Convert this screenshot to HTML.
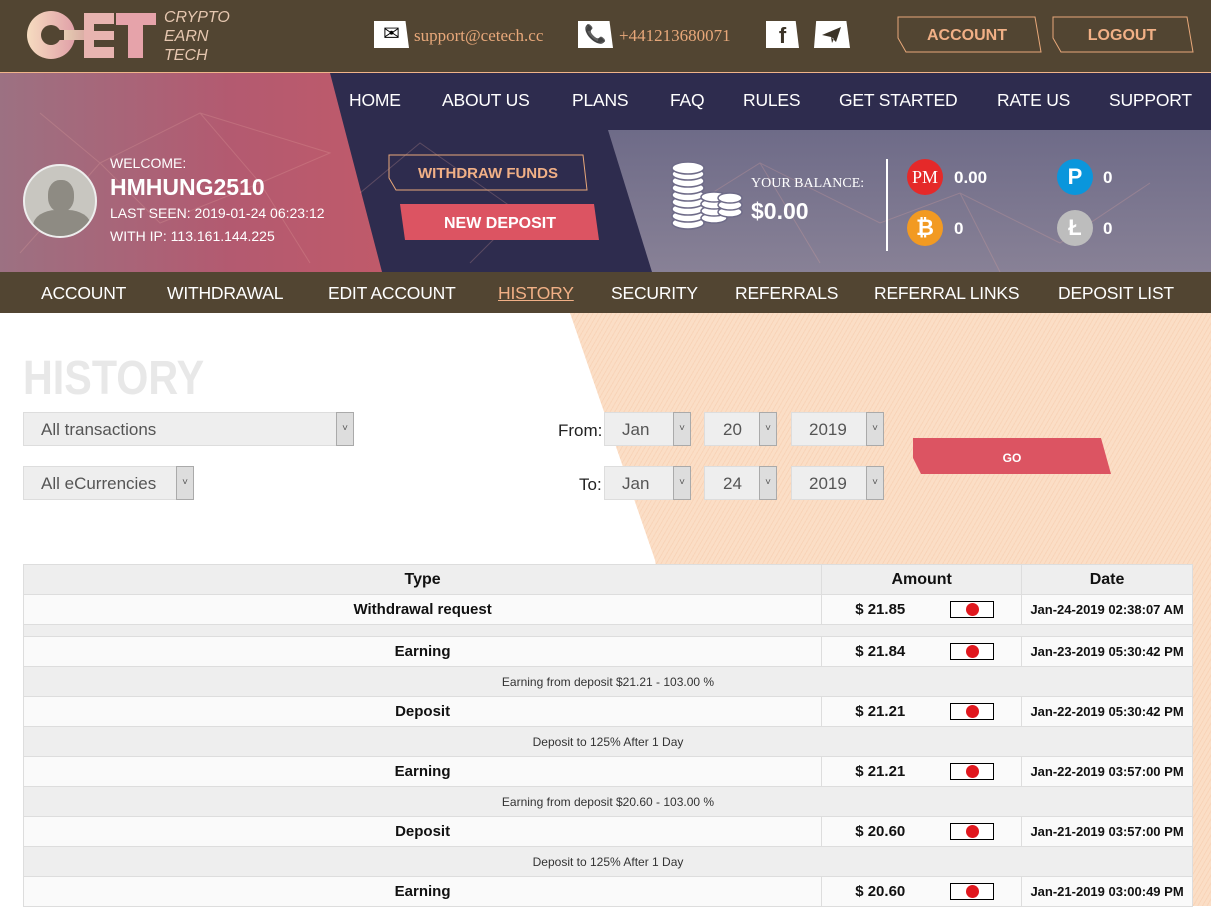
<!DOCTYPE html>
<html><head><meta charset="utf-8"><style>
*{margin:0;padding:0;box-sizing:border-box}
body{width:1211px;height:906px;overflow:hidden;background:#fff;font-family:"Liberation Sans",sans-serif;position:relative}
.a{position:absolute}
.top{left:0;top:0;width:1211px;height:73px;background:#524532;border-bottom:1px solid #f0b48a}
.hero{left:0;top:73px;width:1211px;height:199px;background:#2e2c4e;overflow:hidden}
.nav2{left:0;top:272px;width:1211px;height:41px;background:#524532}
.nav2 span{position:absolute;top:11px;color:#fff;font-size:17.5px;letter-spacing:-.2px}
.menu span{position:absolute;top:17px;color:#fff;font-size:17.5px;letter-spacing:-.2px}
.sel{position:absolute;background:#eee;border:1px solid #ddd;height:34px;color:#555;font-size:17px;padding:7px 0 0 17px}
.sel i{position:absolute;right:-1px;top:-1px;width:18px;height:34px;background:#ddd;border:1px solid #aaa;font-style:normal;font-size:10px;color:#555;text-align:center;line-height:32px}
table{position:absolute;left:23px;top:564px;width:1170px;border-collapse:collapse;font-size:15px}
td{border:1px solid #ddd;text-align:center;height:30px;font-weight:bold;color:#111;background:#fafafa}
tr.h td{background:#eee;font-size:16px}
tr.d td{background:#eee;font-weight:normal;font-size:12px;color:#333}
tr.g td{background:#eee;height:12px}
.amt{text-align:left;padding-left:33px}
.pm{display:inline-block;width:44px;height:17px;border:1px solid #000;background:#fff;vertical-align:middle;margin-left:45px;position:relative}
.pm:after{content:"";position:absolute;left:15px;top:1px;width:13px;height:13px;border-radius:50%;background:#e0181e}
.dt{font-size:13px}
.coin{position:absolute;width:36px;height:36px;border-radius:50%;color:#fff;font-weight:bold;text-align:center;line-height:36px;font-size:22px}
.bal{position:absolute;color:#fff;font-weight:bold;font-size:17px}
</style></head><body>
<div class="a top"></div>
<div class="a" style="left:24px;top:10px;width:132px;height:51px">
<svg width="132" height="51"><defs><linearGradient id="lg" x1="0" x2="1"><stop offset="0" stop-color="#f6dcc0"/><stop offset="1" stop-color="#e0a0a8"/></linearGradient></defs>
<circle cx="27" cy="25" r="24" fill="url(#lg)"/><circle cx="27" cy="25" r="10" fill="#524532"/><rect x="27" y="20" width="40" height="10" fill="#524532"/><rect x="40" y="20" width="36" height="10" fill="url(#lg)" opacity=".9"/>
<rect x="60" y="3" width="30" height="45" fill="#e8b4b0"/><rect x="70" y="14" width="20" height="7" fill="#524532"/><rect x="70" y="30" width="20" height="7" fill="#524532"/>
<rect x="92" y="3" width="40" height="12" fill="#e6a3aa"/><rect x="104" y="3" width="15" height="45" fill="#e6a3aa"/></svg></div>
<div class="a" style="left:164px;top:8px;color:#e6c7b0;font-style:italic;font-size:16px;line-height:19px">CRYPTO<br>EARN<br>TECH</div>
<div class="a" style="left:374px;top:21px;width:35px;height:27px;background:#fff;clip-path:polygon(0 0,90% 0,100% 100%,0 100%);font-size:20px;text-align:center;line-height:27px">✉</div>
<div class="a" style="left:414px;top:26px;color:#e8a87a;font-size:17px;font-family:'Liberation Serif',serif">support@cetech.cc</div>
<div class="a" style="left:578px;top:21px;width:35px;height:27px;background:#fff;clip-path:polygon(0 0,90% 0,100% 100%,0 100%);font-size:18px;text-align:center;line-height:27px">📞</div>
<div class="a" style="left:619px;top:26px;color:#e8a87a;font-size:17px;font-family:'Liberation Serif',serif">+441213680071</div>
<div class="a" style="left:766px;top:21px;width:33px;height:27px;background:#fff;clip-path:polygon(0 0,90% 0,100% 100%,0 100%);font-weight:bold;font-size:22px;text-align:center;line-height:29px;color:#3b3327">f</div>
<div class="a" style="left:814px;top:21px;width:36px;height:27px;background:#fff;clip-path:polygon(6% 0,90% 0,100% 100%,0 100%)"><svg width="36" height="27"><path d="M8 14 L27 6 L22 21 L17 16 Z M17 16 L18 22 L20 18" fill="#3b3327"/></svg></div>
<svg class="a" style="left:896px;top:16px" width="300" height="38"><path d="M2 1 H139 L145 36 H10 L2 22 Z" fill="none" stroke="#e8a87a"/><path d="M157 1 H291 L297 36 H165 L157 22 Z" fill="none" stroke="#e8a87a"/>
<text x="71" y="24" fill="#f1b086" font-weight="bold" font-size="16" text-anchor="middle" font-family="Liberation Sans">ACCOUNT</text><text x="226" y="24" fill="#f1b086" font-weight="bold" font-size="16" text-anchor="middle" font-family="Liberation Sans">LOGOUT</text></svg>
<div class="a hero">
<div class="a" style="left:0;top:0;width:385px;height:199px;background:linear-gradient(90deg,#9c7182,#b35a70 60%,#c05a6a);clip-path:polygon(0 0,330px 0,382px 199px,0 199px)"></div>
<div class="a" style="left:600px;top:57px;width:611px;height:142px;background:linear-gradient(180deg,#6e6b88,#888196);clip-path:polygon(8px 0,611px 0,611px 142px,52px 142px)"></div>
<svg class="a" style="left:0;top:0;opacity:.25" width="1211" height="199"><g stroke="#e6a7a0" fill="none" stroke-width="1"><path d="M100 90 L200 40 L260 110 L160 150 Z M200 40 L330 80 L260 110 L310 190 M360 120 L420 70 L520 140 L470 190 M680 140 L760 90 L880 150 L960 120 L1060 170 L1150 110 M760 90 L820 190 M960 120 L1000 199 M20 180 L100 90 L40 40"/></g></svg>
<div class="menu"><span style="left:349px">HOME</span><span style="left:442px">ABOUT US</span><span style="left:572px">PLANS</span><span style="left:670px">FAQ</span><span style="left:743px">RULES</span><span style="left:839px">GET STARTED</span><span style="left:997px">RATE US</span><span style="left:1109px">SUPPORT</span></div>
<div class="a" style="left:23px;top:91px;width:74px;height:74px;border-radius:50%;background:#c8c6c0;border:2px solid #eee;overflow:hidden"><div class="a" style="left:23px;top:14px;width:26px;height:32px;border-radius:45%;background:#8e8b83"></div><div class="a" style="left:8px;top:44px;width:58px;height:40px;border-radius:40% 40% 0 0;background:#8e8b83"></div></div>
<div class="a" style="left:110px;top:82px;color:#fff;font-size:14px">WELCOME:</div>
<div class="a" style="left:110px;top:101px;color:#fff;font-size:23px;font-weight:bold">HMHUNG2510</div>
<div class="a" style="left:110px;top:132px;color:#fff;font-size:14px">LAST SEEN: 2019-01-24 06:23:12</div>
<div class="a" style="left:110px;top:155px;color:#fff;font-size:14px">WITH IP: 113.161.144.225</div>
<svg class="a" style="left:388px;top:81px" width="212" height="86"><path d="M1 1 H195 L199 36 H8 L1 24 Z" fill="none" stroke="#e8a87a"/><text x="100" y="24" fill="#f1b086" font-weight="bold" font-size="15" text-anchor="middle" font-family="Liberation Sans">WITHDRAW FUNDS</text>
<path d="M12 50 H206 L211 86 H17 Z" fill="#dc5462"/><text x="112" y="74" fill="#fff" font-weight="bold" font-size="16" text-anchor="middle" font-family="Liberation Sans">NEW DEPOSIT</text></svg>
<svg class="a" style="left:668px;top:88px" width="76" height="76"><g fill="#fff" stroke="#6e6b88" stroke-width="1.5">
<ellipse cx="76" cy="0" rx="0" ry="0"/>
<ellipse cx="20" cy="62" rx="16" ry="6"/><ellipse cx="20" cy="55" rx="16" ry="6"/><ellipse cx="20" cy="48" rx="16" ry="6"/><ellipse cx="20" cy="41" rx="16" ry="6"/><ellipse cx="20" cy="34" rx="16" ry="6"/><ellipse cx="20" cy="27" rx="16" ry="6"/><ellipse cx="20" cy="20" rx="16" ry="6"/><ellipse cx="20" cy="13" rx="16" ry="6"/><ellipse cx="20" cy="7" rx="16" ry="6"/>
<ellipse cx="46" cy="57" rx="13" ry="5"/><ellipse cx="46" cy="50" rx="13" ry="5"/><ellipse cx="46" cy="43" rx="13" ry="5"/><ellipse cx="46" cy="36" rx="13" ry="5"/>
<ellipse cx="62" cy="51" rx="12" ry="5"/><ellipse cx="62" cy="44" rx="12" ry="5"/><ellipse cx="62" cy="37" rx="12" ry="5"/></g></svg>
<div class="a" style="left:751px;top:103px;color:#fff;font-size:14px;font-family:'Liberation Serif',serif">YOUR BALANCE:</div>
<div class="a" style="left:751px;top:125px;color:#fff;font-size:23px;font-weight:bold">$0.00</div>
<div class="a" style="left:886px;top:86px;width:2px;height:92px;background:#fff"></div>
<div class="coin" style="left:907px;top:86px;background:#e52929;font-family:'Liberation Serif',serif;font-weight:normal;font-size:18px">PM</div>
<div class="bal" style="left:954px;top:95px">0.00</div>
<div class="coin" style="left:1057px;top:86px;background:#0a96dc">P</div>
<div class="bal" style="left:1103px;top:95px">0</div>
<div class="coin" style="left:907px;top:137px;background:#f29a22">₿</div>
<div class="bal" style="left:954px;top:146px">0</div>
<div class="coin" style="left:1057px;top:137px;background:#bdbdbd">Ł</div>
<div class="bal" style="left:1103px;top:146px">0</div>
</div>
<div class="a nav2"><span style="left:41px">ACCOUNT</span><span style="left:167px">WITHDRAWAL</span><span style="left:328px">EDIT ACCOUNT</span><span style="left:498px;color:#f1b086;text-decoration:underline">HISTORY</span><span style="left:611px">SECURITY</span><span style="left:735px">REFERRALS</span><span style="left:874px">REFERRAL LINKS</span><span style="left:1058px">DEPOSIT LIST</span></div>
<div class="a" style="left:560px;top:313px;width:651px;height:593px;background:repeating-linear-gradient(-60deg,#fbdec6 0 3px,#f8d4b8 3px 4px);clip-path:polygon(10px 0,651px 0,651px 593px,150px 593px,95px 247px)"></div>
<div class="a" style="left:23px;top:351px;font-size:48px;font-weight:bold;color:#e8e8e8;transform:scaleX(.86);transform-origin:0 0">HISTORY</div>
<div class="sel" style="left:23px;top:412px;width:331px">All transactions<i>˅</i></div>
<div class="sel" style="left:23px;top:466px;width:171px">All eCurrencies<i>˅</i></div>
<div class="a" style="left:558px;top:421px;font-size:17px;color:#222">From:</div>
<div class="a" style="left:579px;top:475px;font-size:17px;color:#222">To:</div>
<div class="sel" style="left:604px;top:412px;width:87px">Jan<i>˅</i></div>
<div class="sel" style="left:704px;top:412px;width:73px;padding-left:18px">20<i>˅</i></div>
<div class="sel" style="left:791px;top:412px;width:93px">2019<i>˅</i></div>
<div class="sel" style="left:604px;top:466px;width:87px">Jan<i>˅</i></div>
<div class="sel" style="left:704px;top:466px;width:73px;padding-left:18px">24<i>˅</i></div>
<div class="sel" style="left:791px;top:466px;width:93px">2019<i>˅</i></div>
<svg class="a" style="left:913px;top:438px" width="200" height="38"><path d="M0 0 H188 L198 36 H8 L0 20 Z" fill="#dc5462"/><text x="99" y="24" fill="#fff" font-weight="bold" font-size="12" text-anchor="middle" font-family="Liberation Sans">GO</text></svg>
<table>
<col style="width:799px"><col style="width:200px"><col style="width:171px">
<tr class="h"><td>Type</td><td>Amount</td><td>Date</td></tr>
<tr><td>Withdrawal request</td><td class="amt">$ 21.85<span class="pm"></span></td><td class="dt">Jan-24-2019 02:38:07 AM</td></tr>
<tr class="g"><td colspan="3"></td></tr>
<tr><td>Earning</td><td class="amt">$ 21.84<span class="pm"></span></td><td class="dt">Jan-23-2019 05:30:42 PM</td></tr>
<tr class="d"><td colspan="3">Earning from deposit $21.21 - 103.00 %</td></tr>
<tr><td>Deposit</td><td class="amt">$ 21.21<span class="pm"></span></td><td class="dt">Jan-22-2019 05:30:42 PM</td></tr>
<tr class="d"><td colspan="3">Deposit to 125% After 1 Day</td></tr>
<tr><td>Earning</td><td class="amt">$ 21.21<span class="pm"></span></td><td class="dt">Jan-22-2019 03:57:00 PM</td></tr>
<tr class="d"><td colspan="3">Earning from deposit $20.60 - 103.00 %</td></tr>
<tr><td>Deposit</td><td class="amt">$ 20.60<span class="pm"></span></td><td class="dt">Jan-21-2019 03:57:00 PM</td></tr>
<tr class="d"><td colspan="3">Deposit to 125% After 1 Day</td></tr>
<tr><td>Earning</td><td class="amt">$ 20.60<span class="pm"></span></td><td class="dt">Jan-21-2019 03:00:49 PM</td></tr>
</table>
</body></html>
